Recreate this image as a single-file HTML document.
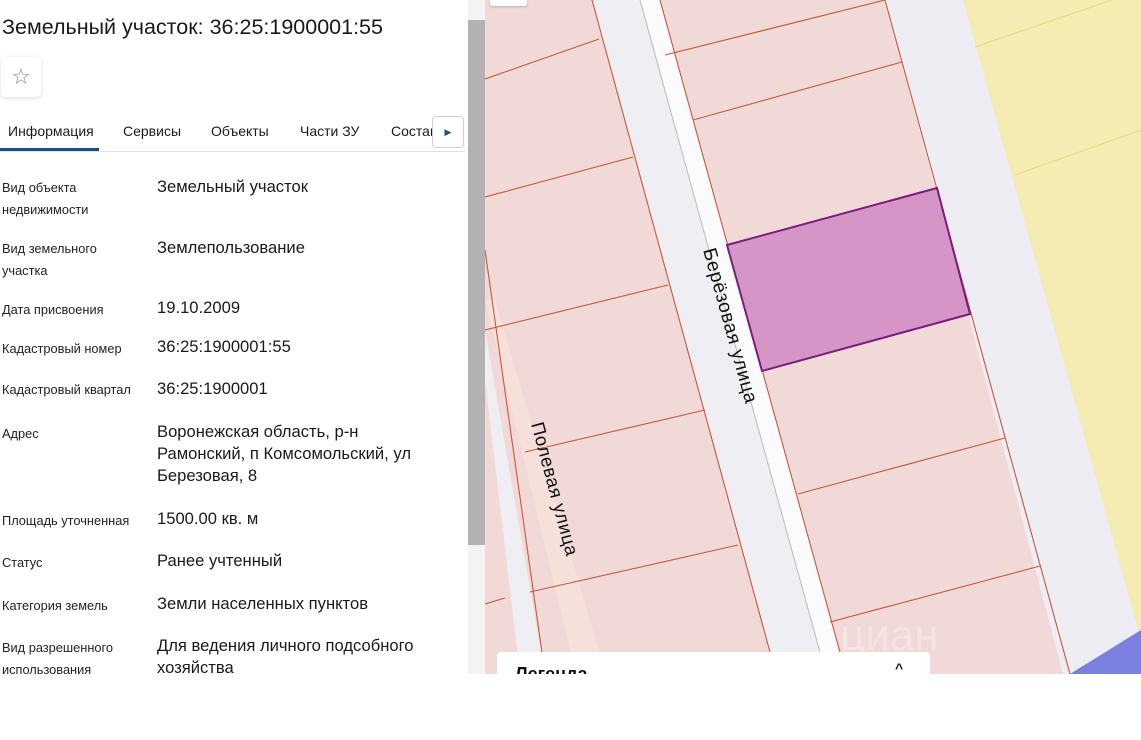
<!DOCTYPE html>
<html><head><meta charset="utf-8"><style>
*{margin:0;padding:0;box-sizing:border-box}
body{width:1141px;height:740px;overflow:hidden;background:#fff;font-family:"Liberation Sans","DejaVu Sans",sans-serif;color:#1a1a1a;position:relative}
.a{position:absolute;white-space:nowrap}
.l{font-size:12.8px;color:#222;line-height:22px}
.v{font-size:16.6px;color:#1a1a1a;line-height:22px}
</style></head><body>
<svg class="a" style="left:485px;top:0" width="656" height="674" viewBox="485 0 656 674">
<rect x="485" y="0" width="656" height="674" fill="#f0d9d6"/>
<polygon points="963,0 1141,0 1141,640" fill="#f5ecb4"/>
<polygon points="885,0 963,0 1141,640 1141,630 1070,674 1063,674" fill="#efedf4"/>
<polygon points="592,0 660,0 846,674 776,674" fill="#efeef3"/>
<polygon points="640,0 660,0 846,674 826,674" fill="#fbfbfd"/>
<line x1="640" y1="0" x2="826" y2="674" stroke="#bbb" stroke-width="1"/>
<polygon points="485,330 485,380 520,674 545,674" fill="#efeef3"/>
<polygon points="485,300 495,300 606,674 576,674" fill="#f6e0da"/>
<g stroke="#c8583a" stroke-width="1.1" fill="none">
<line x1="592" y1="0" x2="776" y2="674"/>
<line x1="660" y1="0" x2="846" y2="674"/>
<line x1="885" y1="0" x2="1070" y2="674"/>
<line x1="485" y1="79" x2="599" y2="39"/>
<line x1="485" y1="197" x2="633" y2="157"/>
<line x1="485" y1="330" x2="668" y2="285"/>
<line x1="525" y1="452" x2="705" y2="410"/>
<line x1="530" y1="592" x2="738" y2="545"/>
<line x1="485" y1="604" x2="505" y2="598"/>
<line x1="665" y1="55" x2="885" y2="0"/>
<line x1="693" y1="120" x2="902" y2="62"/>
<line x1="798" y1="494" x2="1005" y2="438"/>
<line x1="830" y1="622" x2="1040" y2="566"/>
<line x1="485" y1="250" x2="545" y2="674"/>
</g>
<g stroke="#e6d77a" stroke-width="1" fill="none">
<line x1="975" y1="47" x2="1141" y2="-10"/>
<line x1="1015" y1="175" x2="1141" y2="130"/>
</g>
<polygon points="1070,674 1141,630 1141,674" fill="#7b7fe0"/>
<polygon points="727,245 937,188 970,314 762,371" fill="#d596c7" stroke="#7a1c7e" stroke-width="2"/>
<text x="0" y="0" transform="translate(703,250) rotate(74.5)" font-size="19" letter-spacing="0.6" font-family="Liberation Sans,sans-serif" fill="#111">Берёзовая  улица</text>
<text x="0" y="0" transform="translate(531,424) rotate(75)" font-size="18.5" letter-spacing="0.6" font-family="Liberation Sans,sans-serif" fill="#111">Полевая  улица</text>
<text x="840" y="650" font-size="44" fill="#fff" opacity="0.3">циан</text>
</svg>
<div class="a" style="left:490px;top:0;width:37px;height:6px;background:#fff;border-radius:0 0 3px 3px;box-shadow:0 1px 2px rgba(0,0,0,.2)"></div>
<div class="a" style="left:497px;top:652px;width:433px;height:22px;background:#fff;border-radius:4px 4px 0 0;overflow:hidden">
<div class="a" style="left:18px;top:12px;font-size:18px;font-weight:bold;color:#111">Легенда</div>
<div class="a" style="left:398px;top:8px;font-size:14px;font-weight:bold">^</div>
</div>
<div class="a" style="left:0;top:0;width:468px;height:674px;background:#fff"></div>
<div class="a" style="left:468px;top:0;width:17px;height:674px;background:#f3f3f3"></div>
<div class="a" style="left:468px;top:20px;width:17px;height:525px;background:#b3b1b3"></div>
<div class="a" style="left:2px;top:15px;font-size:21.5px;color:#1a1a1a">Земельный участок: 36:25:1900001:55</div>
<div class="a" style="left:1px;top:57px;width:40px;height:40px;background:#fff;border-radius:4px;box-shadow:0 1px 4px rgba(0,0,0,.15);text-align:center;line-height:40px;font-size:22px;color:#888">☆</div>
<div class="a" style="left:8px;top:123px;font-size:14px">Информация</div>
<div class="a" style="left:123px;top:123px;font-size:14px">Сервисы</div>
<div class="a" style="left:211px;top:123px;font-size:14px">Объекты</div>
<div class="a" style="left:300px;top:123px;font-size:14px">Части ЗУ</div>
<div class="a" style="left:391px;top:123px;font-size:14px;width:42px;overflow:hidden">Состав</div>
<div class="a" style="left:432px;top:116px;width:32px;height:32px;background:#fff;border:1px solid #ccd;border-radius:4px;text-align:center;line-height:30px;font-size:9px;color:#1a4f8a">▶</div>
<div class="a" style="left:0;top:151px;width:465px;height:1px;background:#e2e2e2"></div>
<div class="a" style="left:0;top:148px;width:99px;height:3px;background:#1c4f86"></div>

<div class="a l" style="left:2px;top:177px">Вид объекта<br>недвижимости</div>
<div class="a v" style="left:157px;top:176px">Земельный участок</div>
<div class="a l" style="left:2px;top:238px">Вид земельного<br>участка</div>
<div class="a v" style="left:157px;top:237px">Землепользование</div>
<div class="a l" style="left:2px;top:299px">Дата присвоения</div>
<div class="a v" style="left:157px;top:297px">19.10.2009</div>
<div class="a l" style="left:2px;top:338px">Кадастровый номер</div>
<div class="a v" style="left:157px;top:336px">36:25:1900001:55</div>
<div class="a l" style="left:2px;top:379px">Кадастровый квартал</div>
<div class="a v" style="left:157px;top:378px">36:25:1900001</div>
<div class="a l" style="left:2px;top:423px">Адрес</div>
<div class="a v" style="left:157px;top:421px">Воронежская область, р-н<br>Рамонский, п Комсомольский, ул<br>Березовая, 8</div>
<div class="a l" style="left:2px;top:510px">Площадь уточненная</div>
<div class="a v" style="left:157px;top:508px">1500.00 кв. м</div>
<div class="a l" style="left:2px;top:552px">Статус</div>
<div class="a v" style="left:157px;top:550px">Ранее учтенный</div>
<div class="a l" style="left:2px;top:595px">Категория земель</div>
<div class="a v" style="left:157px;top:593px">Земли населенных пунктов</div>
<div class="a" style="left:0;top:630px;width:468px;height:44px;overflow:hidden">
<div class="a l" style="left:2px;top:7px">Вид разрешенного<br>использования</div>
<div class="a v" style="left:157px;top:5px">Для ведения личного подсобного<br>хозяйства</div>
</div>
<div class="a" style="left:0;top:674px;width:1141px;height:66px;background:#fff"></div>
</body></html>
